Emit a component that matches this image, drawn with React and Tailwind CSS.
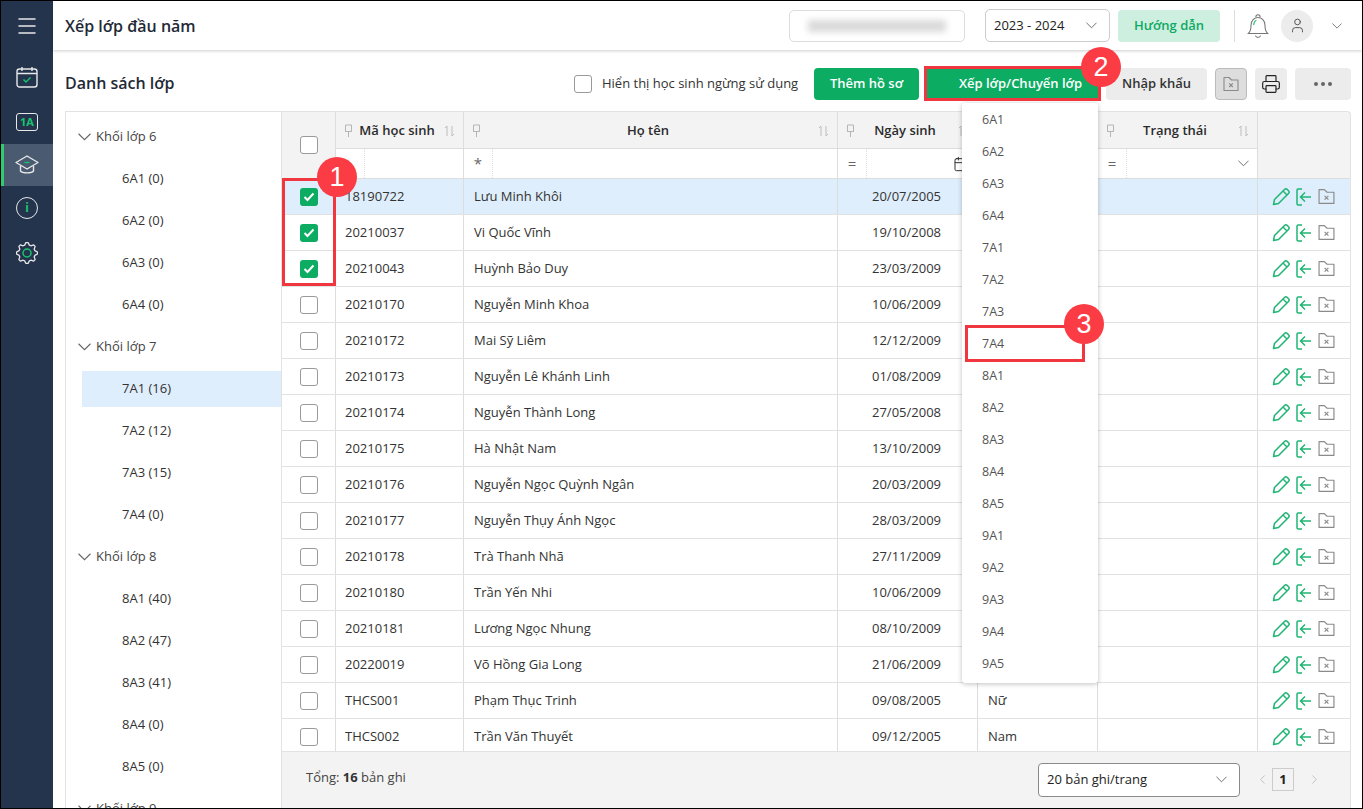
import React from "react";
import { Menu, ChevronLeft, ChevronRight, Printer, User, Calendar } from "lucide-react";

const tree = [
  { name: "Khối lớp 6", items: ["6A1 (0)", "6A2 (0)", "6A3 (0)", "6A4 (0)"] },
  { name: "Khối lớp 7", items: ["7A1 (16)", "7A2 (12)", "7A3 (15)", "7A4 (0)"] },
  { name: "Khối lớp 8", items: ["8A1 (40)", "8A2 (47)", "8A3 (41)", "8A4 (0)", "8A5 (0)"] },
  { name: "Khối lớp 9", items: [] },
];

const students = [
  ["18190722", "Lưu Minh Khôi", "20/07/2005", ""],
  ["20210037", "Vi Quốc Vĩnh", "19/10/2008", ""],
  ["20210043", "Huỳnh Bảo Duy", "23/03/2009", ""],
  ["20210170", "Nguyễn Minh Khoa", "10/06/2009", ""],
  ["20210172", "Mai Sỹ Liêm", "12/12/2009", ""],
  ["20210173", "Nguyễn Lê Khánh Linh", "01/08/2009", ""],
  ["20210174", "Nguyễn Thành Long", "27/05/2008", ""],
  ["20210175", "Hà Nhật Nam", "13/10/2009", ""],
  ["20210176", "Nguyễn Ngọc Quỳnh Ngân", "20/03/2009", ""],
  ["20210177", "Nguyễn Thụy Ánh Ngọc", "28/03/2009", ""],
  ["20210178", "Trà Thanh Nhã", "27/11/2009", ""],
  ["20210180", "Trần Yến Nhi", "10/06/2009", ""],
  ["20210181", "Lương Ngọc Nhung", "08/10/2009", ""],
  ["20220019", "Võ Hồng Gia Long", "21/06/2009", ""],
  ["THCS001", "Phạm Thục Trinh", "09/08/2005", "Nữ"],
  ["THCS002", "Trần Văn Thuyết", "09/12/2005", "Nam"],
];

const classes = ["6A1","6A2","6A3","6A4","7A1","7A2","7A3","7A4","8A1","8A2","8A3","8A4","8A5","9A1","9A2","9A3","9A4","9A5"];

// gear outline: 8 teeth around the centre
const gearPath = Array.from({ length: 32 }, (_, i) => {
  const a = ((i - 0.5) / 32) * Math.PI * 2;
  const r = [10.5, 10.5, 8.2, 8.2][i % 4];
  return `${i === 0 ? "M" : "L"}${(11 + r * Math.cos(a)).toFixed(2)} ${(11 + r * Math.sin(a)).toFixed(2)}`;
}).join("") + "Z";

const Chevron = ({ w = 11, className = "" }) => (
  <svg width={w} height={Math.ceil(w / 2) + 1} viewBox="0 0 12 7" fill="none" stroke="#666" strokeWidth="1" className={`shrink-0 ${className}`}>
    <path d="M.5.5L6 6l5.500-5.500" />
  </svg>
);

const PinIcon = () => (
  <svg width="9" height="14" viewBox="0 0 9 14" fill="none" stroke="#b5b5b5" strokeWidth="1" className="shrink-0">
    <path d="M1.500 1h6v6.500h-6zM1.500 7.500h6M4.500 8v5" />
  </svg>
);

const SortIcon = () => (
  <svg width="11" height="12" viewBox="0 0 11 12" fill="none" stroke="#bdbdbd" strokeWidth="1" className="shrink-0">
    <path d="M3 11V1L1 3M8 1v10l2-2" />
  </svg>
);

const FolderX = ({ size = 16, color = "#8a8a8a" }) => (
  <svg width={size} height={size} viewBox="0 0 16 16" fill="none" stroke={color} strokeWidth="1.100">
    <path d="M1 14.500V1.500h5l2.500 2.500H15v10.500z" strokeLinejoin="round" />
    <path d="M6.200 7.400l3.600 3.600M9.800 7.400l-3.600 3.600" />
  </svg>
);

const EditIcon = () => (
  <svg width="18" height="18" viewBox="0 0 18 18" fill="none" stroke="#1fb573" strokeWidth="1.500" strokeLinejoin="round">
    <path d="M1.500 16.500l1-5L12.500 1.500c.8-.8 2-.8 2.800 0l1.200 1.200c.8.8.8 2 0 2.800L6.500 15.500z" />
    <path d="M11 3l4 4" />
  </svg>
);

const EnterIcon = () => (
  <svg width="16" height="18" viewBox="0 0 16 18" fill="none" stroke="#1fb573" strokeWidth="1.500">
    <path d="M6 1H2.200C1.500 1 1 1.500 1 2.200v13.600C1 16.500 1.500 17 2.200 17H6" />
    <path d="M15 9H5M9 4.500L4.500 9 9 13.500" />
  </svg>
);

const Check = () => (
  <svg width="12" height="10" viewBox="0 0 12 10" fill="none" stroke="#fff" strokeWidth="2">
    <path d="M1.500 5l3 3 6-6.500" />
  </svg>
);

const Box = ({ checked }) =>
  checked ? (
    <div className="w-[18px] h-[18px] rounded-[3px] bg-[#0cac63] flex items-center justify-center"><Check /></div>
  ) : (
    <div className="w-[18px] h-[18px] rounded-[3px] bg-white border border-[#9a9a9a]" />
  );

const Badge = ({ className, children }) => (
  <div className={`absolute w-10 h-10 rounded-full bg-[#fb3c45] text-white flex items-center justify-center text-[27px] font-['Liberation_Sans'] ${className}`}>{children}</div>
);

const Sidebar = () => (
  <div className="w-[52px] shrink-0 bg-[#24344d] flex flex-col items-center text-white">
    <div className="h-[50px] flex items-center justify-center"><Menu size={24} strokeWidth={1.500} color="#e8e8e8" /></div>
    <div className="h-[42px] mt-[5px] w-full flex items-center justify-center">
      <svg width="22" height="22" viewBox="0 0 22 22" fill="none" stroke="#e8e8e8" strokeWidth="1.400">
        <rect x="1" y="3" width="20" height="18" rx="2.500" />
        <path d="M1 7.500h20M6 1v4M16 1v4" />
        <path d="M7.500 13.500l2.500 2.500 4.500-4.500" stroke="#18c26e" />
      </svg>
    </div>
    <div className="h-[42px] mt-[3px] w-full flex items-center justify-center">
      <div className="w-[22px] h-[18px] border-[1.5px] border-[#e8e8e8] rounded-[3px] text-[11px] leading-[15px] font-bold text-[#18c26e] text-center">1A</div>
    </div>
    <div className="h-[42px] mt-px w-full bg-[#4a5a70] border-l-[3px] border-[#2ecc71] flex items-center justify-center pr-[3px]">
      <svg width="24" height="22" viewBox="0 0 24 22" fill="none" stroke="#e8e8e8" strokeWidth="1.400" strokeLinejoin="round">
        <path d="M12 2L23 8.500 12 15 1 8.500z" />
        <path d="M5.500 12v5c2 2.500 11 2.500 13 0v-5" />
        <path d="M9.500 8.500h5" stroke="#18c26e" />
      </svg>
    </div>
    <div className="h-[42px] mt-px w-full flex items-center justify-center">
      <div className="w-[22px] h-[22px] rounded-full border-[1.5px] border-[#e8e8e8] flex items-center justify-center text-[12px] font-bold text-[#18c26e]">i</div>
    </div>
    <div className="h-[42px] mt-[3px] w-full flex items-center justify-center">
      <svg width="22" height="22" viewBox="0 0 22 22" fill="none" stroke="#e8e8e8" strokeWidth="1.300" strokeLinejoin="round">
        <path d={gearPath} />
        <circle cx="11" cy="11" r="4" stroke="#18c26e" strokeWidth="1.500" />
      </svg>
    </div>
  </div>
);

const Header = () => (
  <div className="h-[49px] shrink-0 bg-white shadow-[0_1px_3px_rgba(0,0,0,0.2)] relative z-10 flex items-center pl-3 pr-5">
    <div className="text-[16px] font-semibold text-[#1f2a37]">Xếp lớp đầu năm</div>
    <div className="ml-auto w-[176px] h-[32px] rounded-[5px] border border-[#dddddd] flex items-center justify-center">
      <div className="w-[138px] h-[12px] bg-[#dadada] blur-[3px]" />
    </div>
    <div className="ml-5 w-[125px] h-[33px] rounded-[5px] border border-[#cccccc] flex items-center justify-between pl-2 pr-3 text-[13px] text-[#222]">
      2023 - 2024 <Chevron />
    </div>
    <div className="ml-2 w-[102px] h-[32px] rounded-[4px] bg-[#ccefdf] text-[#10a964] text-[13px] font-semibold flex items-center justify-center">Hướng dẫn</div>
    <div className="ml-[14px] w-px h-8 bg-[#dddddd]" />
    <svg width="26" height="30" viewBox="0 0 24 28" fill="none" stroke="#777" strokeWidth="1" className="ml-[10px]">
      <path d="M3 21c2-2 2.500-4 2.500-8 0-4 3-7 6.500-7s6.500 3 6.500 7c0 4 .5 6 2.500 8z" />
      <path d="M10 5.500a2 2 0 014 0M9.500 23a2.700 2.700 0 005 0" />
      <path d="M8 13c0-2 .8-3.500 2.500-4.500" stroke="#18c26e" />
    </svg>
    <div className="ml-[10px] w-8 h-8 rounded-full bg-[#ececec] flex items-center justify-center"><User size={17} strokeWidth={1.400} color="#555" /></div>
    <Chevron w={10} className="ml-[19px]" />
  </div>
);

const Toolbar = () => (
  <div className="h-[61px] shrink-0 flex items-center pl-3 pr-[11px] pt-[7px]">
    <div className="text-[16px] font-semibold text-[#1f2a37] pb-[2px]">Danh sách lớp</div>
    <div className="ml-auto w-[18px] h-[18px] rounded-[3px] bg-white border border-[#9a9a9a]" />
    <div className="ml-[10px] text-[13px] text-[#333] w-[196px] whitespace-nowrap">Hiển thị học sinh ngừng sử dụng</div>
    <div className="ml-[16px] w-[105px] h-8 rounded-[4px] bg-[#0cac63] text-white text-[13px] font-semibold flex items-center justify-center">Thêm hồ sơ</div>
    <div className="ml-[6px] w-[174px] h-8 rounded-[4px] bg-[#0cac63] text-white text-[13px] font-semibold flex items-center justify-center pl-[17px]">Xếp lớp/Chuyển lớp</div>
    <div className="ml-[7px] w-[101px] h-8 rounded-[4px] bg-[#ececec] text-[#333] text-[13px] font-semibold flex items-center justify-center">Nhập khẩu</div>
    <div className="ml-2 w-8 h-8 rounded-[4px] bg-[#dddddd] border border-[#bbbbbb] flex items-center justify-center"><FolderX /></div>
    <div className="ml-2 w-8 h-8 rounded-[4px] bg-[#ececec] flex items-center justify-center"><Printer size={20} strokeWidth={1.400} color="#222" /></div>
    <div className="ml-[8px] w-14 h-8 rounded-[4px] bg-[#ececec] flex items-center justify-center gap-[3px]">
      <span className="w-[4px] h-[4px] rounded-full bg-[#666]" />
      <span className="w-[4px] h-[4px] rounded-full bg-[#666]" />
      <span className="w-[4px] h-[4px] rounded-full bg-[#666]" />
    </div>
  </div>
);

const Tree = () => (
  <div className="w-[217px] shrink-0 border-t border-l border-r border-[#e2e2e2] overflow-hidden pt-1 bg-white">
    {tree.map((g) => (
      <div key={g.name}>
        <div className="h-[42px] flex items-center pl-[12px] text-[13px] text-[#444]">
          <Chevron w={13} className="mr-[5px]" />
          {g.name}
        </div>
        {g.items.map((c) => (
          <div key={c} className="h-[42px] flex items-center text-[13px] text-[#333]">
            <div className={`ml-[16px] w-[199px] h-9 flex items-center pl-[40px] ${c === "7A1 (16)" ? "bg-[#dfeefc]" : ""}`}>{c}</div>
          </div>
        ))}
      </div>
    ))}
  </div>
);

const HeadCell = ({ title, className = "" }) => (
  <div className={`h-9 border-r border-[#dddddd] flex items-center px-2 pt-[2px] text-[13px] font-semibold text-[#2b2b2b] ${className}`}>
    <PinIcon />
    <div className="flex-1 text-center pr-[3px]">{title}</div>
    <SortIcon />
  </div>
);

const FilterCell = ({ op, className = "", icon }) => (
  <div className={`h-[29px] bg-white border-r border-[#dddddd] flex items-center text-[15px] text-[#666] ${className}`}>
    <div className="w-[29px] h-full shrink-0 border-r border-dotted border-[#dddddd] flex items-center justify-center">{op}</div>
    <div className="flex-1 flex justify-end pr-2">{icon}</div>
  </div>
);

const cols = ["w-[128px]", "w-[374px]", "w-[140px]", "w-[120px]", "w-[160px]"];

const StudentTable = () => (
  <div className="w-[1069px] flex flex-col bg-[#f3f3f3] border-t border-r border-[#e2e2e2] rounded-tr-[4px] overflow-hidden">
    <div className="flex shrink-0 border-b border-[#dddddd]">
      <div className="w-[54px] shrink-0 border-r border-[#dddddd] flex items-center justify-center"><Box /></div>
      <div className="flex flex-col">
        <div className="flex border-b border-[#dddddd]">
          <HeadCell title="Mã học sinh" className={cols[0]} />
          <HeadCell title="Họ tên" className={cols[1]} />
          <HeadCell title="Ngày sinh" className={cols[2]} />
          <HeadCell title="Giới tính" className={cols[3]} />
          <HeadCell title="Trạng thái" className={cols[4]} />
        </div>
        <div className="flex">
          <FilterCell op="" className={cols[0]} />
          <FilterCell op="*" className={cols[1]} />
          <FilterCell op="=" className={cols[2]} icon={<Calendar size={16} strokeWidth={1.500} color="#333" />} />
          <FilterCell op="=" className={cols[3]} />
          <FilterCell op="=" className={cols[4]} icon={<Chevron />} />
        </div>
      </div>
      <div className="flex-1" />
    </div>
    <div className="flex-1 min-h-0 overflow-hidden bg-white">
      {students.map((s, i) => (
        <div key={s[0]} className={`h-9 flex items-center border-b border-[#e2e2e2] text-[13px] text-[#333] ${i === 0 ? "bg-[#dfeefc]" : ""}`}>
          <div className="w-[54px] h-full shrink-0 border-r border-[#dddddd] flex items-center justify-center"><Box checked={i < 3} /></div>
          <div className={`${cols[0]} h-full border-r border-[#dddddd] flex items-center pl-[9px]`}>{s[0]}</div>
          <div className={`${cols[1]} h-full border-r border-[#dddddd] flex items-center pl-[10px]`}>{s[1]}</div>
          <div className={`${cols[2]} h-full border-r border-[#dddddd] flex items-center pl-[34px]`}>{s[2]}</div>
          <div className={`${cols[3]} h-full border-r border-[#dddddd] flex items-center pl-[10px]`}>{s[3]}</div>
          <div className={`${cols[4]} h-full border-r border-[#dddddd]`} />
          <div className="flex-1 flex items-center gap-[6px] pl-[14px]">
            <EditIcon />
            <EnterIcon />
            <FolderX size={17} />
          </div>
        </div>
      ))}
    </div>
    <div className="h-[57px] shrink-0 border-t border-[#e2e2e2] flex items-center pl-6 pr-7 pb-[5px] text-[13px] text-[#444]">
      <div>Tổng: <b className="font-bold text-[#333]">16</b> bản ghi</div>
      <div className="ml-auto mt-1 w-[202px] h-[34px] rounded-[4px] border border-[#8a8a8a] bg-white flex items-center justify-between pl-2 pr-3 text-[13px] text-[#222]">
        20 bản ghi/trang <Chevron />
      </div>
      <ChevronLeft size={15} strokeWidth={1.500} color="#bdbdbd" className="ml-[15px] mt-1" />
      <div className="ml-[2px] mt-1 w-[22px] h-[23px] border border-[#cccccc] flex items-center justify-center font-bold text-[13px] text-[#222]">1</div>
      <ChevronRight size={15} strokeWidth={1.500} color="#bdbdbd" className="ml-[13px] mt-1" />
    </div>
  </div>
);

const Dropdown = () => (
  <div className="absolute left-[961px] top-[102px] w-[136px] bg-white rounded-[3px] shadow-[0_1px_5px_rgba(0,0,0,0.25)] pt-px pb-[3px] z-20">
    {classes.map((c) => (
      <div key={c} className="h-8 flex items-center pl-5 text-[12.500px] text-[#555]">{c}</div>
    ))}
  </div>
);

export default function App() {
  return (
    <div className="relative w-[1363px] h-[809px] border border-black flex overflow-hidden bg-white font-['Open_Sans',sans-serif]">
      <Sidebar />
      <div className="flex-1 min-w-0 flex flex-col">
        <Header />
        <Toolbar />
        <div className="flex-1 min-h-0 flex pl-3">
          <Tree />
          <StudentTable />
        </div>
      </div>
      <Dropdown />
      <div className="absolute left-[281px] top-[177px] w-[54px] h-[108px] border-[3px] border-[#f0373f] z-30" />
      <div className="absolute left-[923px] top-[65px] w-[177px] h-[35px] border-[3px] border-[#f0373f] z-30" />
      <div className="absolute left-[964px] top-[324px] w-[120px] h-[37px] border-[3px] border-[#f0373f] z-30" />
      <Badge className="left-[316px] top-[156px] z-40">1</Badge>
      <Badge className="left-[1080px] top-[46px] z-40">2</Badge>
      <Badge className="left-[1063px] top-[303px] z-40">3</Badge>
    </div>
  );
}
